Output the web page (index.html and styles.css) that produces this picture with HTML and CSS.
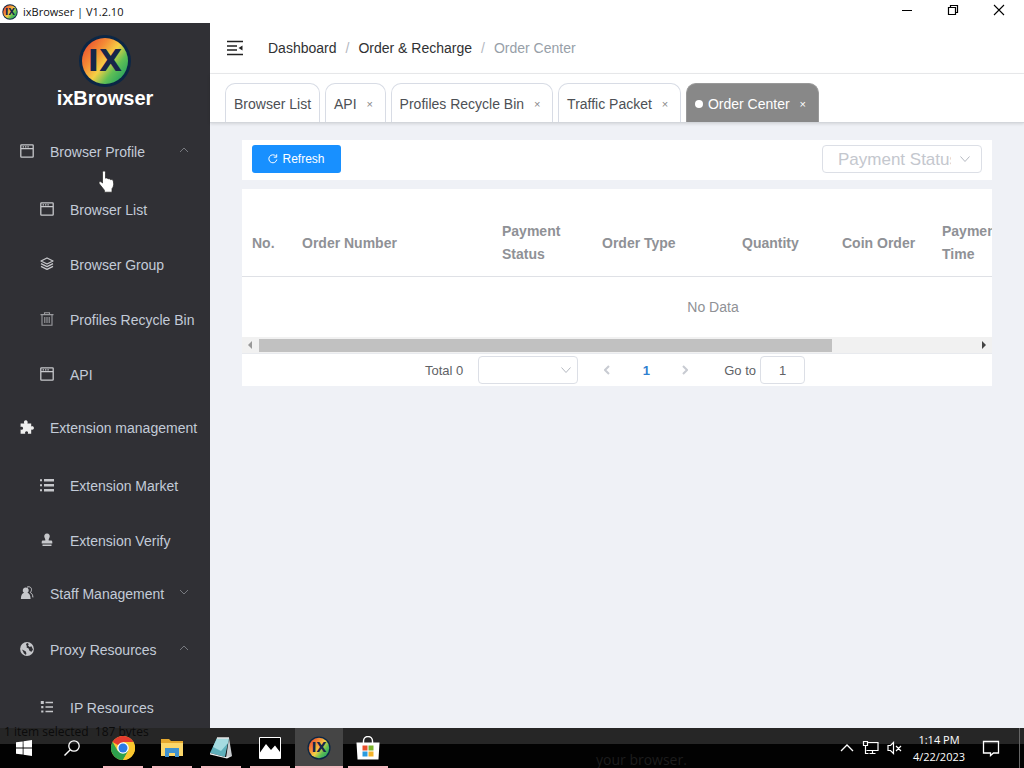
FILE: index.html
```html
<!DOCTYPE html>
<html lang="en">
<head>
<meta charset="utf-8">
<title>ixBrowser | V1.2.10</title>
<link rel="stylesheet" href="styles.css">
</head>
<body>
<svg class="defs" aria-hidden="true">
  <defs>
    <linearGradient id="rainbow" x1="0" y1="0.1" x2="1" y2="0.9">
      <stop offset="0" stop-color="#e8452f"/><stop offset="0.3" stop-color="#f58a35"/><stop offset="0.52" stop-color="#f4cf45"/><stop offset="0.72" stop-color="#5fbf55"/><stop offset="1" stop-color="#169a62"/>
    </linearGradient>
    <symbol id="logo" viewBox="0 0 54 54">
      <circle cx="27" cy="27" r="26" fill="#0b2645"/>
      <circle cx="27" cy="27" r="23" fill="url(#rainbow)"/>
      <text x="27" y="37" text-anchor="middle" class="logo-text">IX</text>
    </symbol>
    <symbol id="window" viewBox="0 0 14 14"><path d="M1.5.8h11q.7 0 .7.7v11q0 .7-.7.7h-11q-.7 0-.7-.7v-11q0-.7.7-.7zM1 4.7h12M2.6 2.8h1.4M5 2.8h1.4M7.4 2.8h1.4" fill="none" stroke="currentColor" stroke-width="1.3"/></symbol>
    <symbol id="list" viewBox="0 0 14 14"><path d="M4 1h10v2.4H4zM4 6h10v2.4H4zM4 11h10v2.4H4zM0 1.2h2v2H0zM0 6.2h2v2H0zM0 11.2h2v2H0z" fill="currentColor"/></symbol>
  </defs>
</svg>

<header class="titlebar">
  <svg class="title-logo"><use href="#logo"/></svg>
  <span class="title-text">ixBrowser | V1.2.10</span>
  <div class="window-buttons">
    <button aria-label="Minimize"><svg width="12" height="12"><path d="M1 6.5h10" stroke="#000" fill="none"/></svg></button>
    <button aria-label="Restore"><svg width="12" height="12"><path d="M1.500 3.500h7v7h-7zM3.500 3.500v-2h7v7h-2" stroke="#000" stroke-width="1.2" fill="none"/></svg></button>
    <button aria-label="Close"><svg width="12" height="12"><path d="M1 1l10 10M11 1L1 11" stroke="#000" stroke-width="1.1" fill="none"/></svg></button>
  </div>
</header>

<div class="app">
  <nav class="sidebar">
    <div class="brand"><svg class="brand-logo"><use href="#logo"/></svg><span>ixBrowser</span></div>
    <ul class="menu">
      <li><a class="item" href="#"><svg class="icon"><use href="#window"/></svg>Browser Profile<svg class="arrow" viewBox="0 0 10 6"><path d="M1 5l4-4 4 4"/></svg></a>
        <ul>
          <li><a class="item sub" href="#"><svg class="icon"><use href="#window"/></svg>Browser List</a></li>
          <li><a class="item sub" href="#"><svg class="icon" viewBox="0 0 14 14"><path d="M7 1l6 3-6 3-6-3zM1 6.600l6 3 6-3M1 9.400l6 3 6-3" fill="none" stroke="currentColor" stroke-width="1.3" stroke-linejoin="round"/></svg>Browser Group</a></li>
          <li><a class="item sub dim" href="#"><svg class="icon" viewBox="0 0 14 14"><path d="M.5 2.600h13M4.500 2.500V.7h5v1.800M2 3v10.200h10V3M4.800 5v6M7 5v6M9.200 5v6" fill="none" stroke="currentColor" stroke-width="1.1"/></svg><span>Profiles Recycle Bin</span></a></li>
          <li><a class="item sub" href="#"><svg class="icon"><use href="#window"/></svg>API</a></li>
        </ul>
      </li>
      <li><a class="item" href="#"><svg class="icon bright" viewBox="0 0 14 14"><path d="M.6 3.400h3.700C3.400 1.700 4.300.2 5.800.2s2.400 1.500 1.600 3.200h3.800v3.200c1.500-.7 2.700.1 2.700 1.400s-1.200 2.100-2.700 1.400v4.300H7.800c.7-1.500 0-2.500-1.200-2.500s-2 .9-1.300 2.500H.6V9.500c1.500.6 2.500-.1 2.500-1.300S2 6.300.6 6.900z" fill="currentColor"/></svg>Extension management</a>
        <ul>
          <li><a class="item sub" href="#"><svg class="icon"><use href="#list"/></svg>Extension Market</a></li>
          <li><a class="item sub" href="#"><svg class="icon" viewBox="0 0 14 14"><path d="M7 .6a2.700 2.700 0 0 1 2.500 3.900C8.700 5.800 8.600 6.600 8.700 7.600h2.400q1.200 0 1.200 1.300v1.600H1.700V8.900q0-1.300 1.200-1.300h2.400c.1-1 0-1.800-.8-3.100A2.700 2.700 0 0 1 7 .6zM2.500 11.400h9v1.600h-9z" fill="currentColor"/></svg>Extension Verify</a></li>
        </ul>
      </li>
      <li><a class="item" href="#"><svg class="icon" viewBox="0 0 14 14"><path d="M5.800 1.500a2.900 2.900 0 0 1 1.700 5.300c2 .7 3 2.600 3.100 6.200H.9c.1-3.600 1-5.500 3.100-6.200a2.900 2.900 0 0 1 1.800-5.300z" fill="currentColor"/><path d="M7 1.200c2.700-1.300 5 .6 4.400 3.200-.2 1-.6 1.600-1.200 2.100 1.800.8 2.600 2.500 2.700 4.900" fill="none" stroke="currentColor"/></svg>Staff Management<svg class="arrow" viewBox="0 0 10 6"><path d="M1 1l4 4 4-4"/></svg></a></li>
      <li><a class="item" href="#"><svg class="icon" viewBox="0 0 14 14"><circle cx="7" cy="7" r="6.900" fill="currentColor"/><path d="M7 .8L8.800 2 8 3.400l1.600 1.500 1.800-.6L13 7.400l-1.400 2.300L9.600 9 8.600 6.600 6.600 5.500 6.800 4 6 2.400zM2 7.500l3.600 1.700.8 2L6 13 4 11.500z" fill="#303035"/></svg>Proxy Resources<svg class="arrow" viewBox="0 0 10 6"><path d="M1 5l4-4 4 4"/></svg></a>
        <ul>
          <li><a class="item sub" href="#"><svg class="icon" viewBox="0 0 14 14"><path d="M5.500 2.500H13M5.500 7H13M5.500 11.500H13" stroke="currentColor" stroke-width="1.4"/><path d="M.8 1h3v3h-3zM1.200 6h2.200v2.200H1.200zM1.200 10.400h2.200v2.200H1.200z" fill="currentColor"/></svg>IP Resources</a></li>
        </ul>
      </li>
    </ul>
    <svg class="cursor" viewBox="0 0 18 23"><path d="M7 .8q1.500 0 1.500 1.700v5.700c.9-.5 2.200-.2 2.500.7 1-.5 2.200-.1 2.500.8 1-.4 2.500 0 2.800 1.200l.3 2.300c.2 2-.3 4-1.600 5.500v3.500H7.400v-2L2.300 13.800C1.300 12.300 2.700 10.800 4.300 12L5.500 13V2.500Q5.500.8 7 .8z" fill="#fff" stroke="#222" stroke-width=".7"/></svg>
  </nav>

  <div class="main">
    <div class="topbar">
      <button class="fold" aria-label="Collapse menu"><svg width="18" height="16" viewBox="0 0 18 16"><path d="M1 1.500h16M1 6h10M1 10h10M1 14.500h16" stroke="#222" stroke-width="1.600"/><path d="M12.500 8L16.500 5.500v5z" fill="#222"/></svg></button>
      <nav class="crumbs" aria-label="Breadcrumb"><a href="#">Dashboard</a><i>/</i><a href="#">Order &amp; Recharge</a><i>/</i><span>Order Center</span></nav>
    </div>
    <div class="tabs">
      <a class="tab" href="#">Browser List</a>
      <div class="tab"><a href="#">API</a><button aria-label="Close API">×</button></div>
      <div class="tab"><a href="#">Profiles Recycle Bin</a><button aria-label="Close Profiles Recycle Bin">×</button></div>
      <div class="tab"><a href="#">Traffic Packet</a><button aria-label="Close Traffic Packet">×</button></div>
      <div class="tab active"><a href="#">Order Center</a><button aria-label="Close Order Center">×</button></div>
    </div>
    <main class="content">
      <section class="toolbar">
        <button class="refresh"><svg width="10" height="10" viewBox="0 0 10 10"><path d="M8.800 5.500A4 4 0 1 1 7.800 2.100M8.700.3v2.900H5.800" fill="none" stroke="#fff"/></svg>Refresh</button>
        <span class="select status"><select aria-label="Payment Status"><option>Payment Status</option></select><svg viewBox="0 0 10 6"><path d="M.5.5L5 5.500 9.500.5"/></svg></span>
      </section>
      <section class="card">
        <div class="table-wrap">
          <table>
            <colgroup><col class="w50"><col class="w200"><col class="w100"><col class="w140"><col class="w100"><col class="w100"><col class="w100"><col></colgroup>
            <thead><tr><th>No.</th><th>Order Number</th><th>Payment Status</th><th>Order Type</th><th>Quantity</th><th>Coin Order</th><th>Payment Time</th><td></td></tr></thead>
            <tbody><tr><td class="empty" colspan="8">No Data</td></tr></tbody>
          </table>
        </div>
        <div class="scrollbar">
          <svg class="step off" viewBox="0 0 4 8"><path d="M4 0v8L0 4z"/></svg>
          <div class="track"><div class="thumb"></div></div>
          <svg class="step" viewBox="0 0 4 8"><path d="M0 0v8l4-4z"/></svg>
        </div>
        <div class="pager">
          <span>Total 0</span>
          <span class="select size"><select aria-label="Page size"><option></option></select><svg viewBox="0 0 10 6"><path d="M.5.5L5 5.500 9.500.5"/></svg></span>
          <div class="pages">
            <button aria-label="Previous page"><svg width="6" height="10"><path d="M5 1L1 5l4 4"/></svg></button>
            <button class="current">1</button>
            <button aria-label="Next page"><svg width="6" height="10"><path d="M1 1l4 4-4 4"/></svg></button>
          </div>
          <label>Go to<input type="text" value="1"></label>
        </div>
      </section>
    </main>
  </div>
</div>

<footer class="taskbar">
  <span class="ghost ghost-left">1 item selected&nbsp; 187 bytes</span>
  <span class="ghost ghost-mid">your browser.</span>
  <button class="task" aria-label="Start"><svg width="16" height="16" viewBox="0 0 16 16"><path d="M0 2.300L6.700 1.400v6.200H0zM7.500 1.300L16 0v7.600H7.500zM0 8.400h6.700v6.200L0 13.700zM7.500 8.400H16V16l-8.500-1.200z" fill="#fff"/></svg></button>
  <button class="task" aria-label="Search"><svg width="16" height="16" viewBox="0 0 16 16"><circle cx="10" cy="6" r="5.200" fill="none" stroke="#fff" stroke-width="1.300"/><path d="M6.300 9.700L.5 15.500" stroke="#fff" stroke-width="1.400"/></svg></button>
  <div class="pinned">
    <button class="task open" aria-label="Chrome"><svg width="24" height="24" viewBox="0 0 24 24"><circle cx="12" cy="12" r="12" fill="#fbc72e"/><path d="M12 12L1.600 6A12 12 0 0 1 22.400 6H12z" fill="#e33b2e"/><path d="M1.600 6A12 12 0 0 0 12 24l5.200-9L12 12 6.800 15z" fill="#2da14c"/><path d="M12 24l5.200-9a6 6 0 0 0 0-6L22.400 6A12 12 0 0 1 12 24z" fill="#fbc72e"/><circle cx="12" cy="12" r="5.800" fill="#fff"/><circle cx="12" cy="12" r="4.500" fill="#2c7be5"/></svg></button>
    <button class="task open" aria-label="File Explorer"><svg width="22" height="20" viewBox="0 0 22 20"><path d="M0 1h8l2 2h12v15H0z" fill="#e5a92f"/><path d="M0 5h22v13H0z" fill="#fbd76a"/><path d="M4 10h14v9h-4v-4H8v4H4z" fill="#3f92cf"/></svg></button>
    <button class="task open" aria-label="Notepad"><svg width="24" height="24" viewBox="0 0 24 24"><path d="M20 2l3 18-6 2z" fill="#c9cdd0"/><path d="M8 2h12l-4 19L1 17z" fill="#5fb0bb"/><path d="M8 2h12l-1 5-7 8-8-4z" fill="#a5dbe0"/><path d="M1 17l15 4 7-1-5 2.500L1 18.500z" fill="#eef1f1"/><path d="M8 2h12" stroke="#e5e5e5" stroke-width="1.500"/></svg></button>
    <button class="task open" aria-label="Photos"><svg width="22" height="22" viewBox="0 0 22 22"><path d="M.5.5h21v21H.5z" fill="#000" stroke="#fff"/><path d="M1 15.500L7 7l5 6 4-4.500 5 6.500V21H1z" fill="#fff"/></svg></button>
    <button class="task open active" aria-label="ixBrowser"><svg width="24" height="24"><use href="#logo"/></svg></button>
    <button class="task open" aria-label="Store"><svg width="24" height="24" viewBox="0 0 24 24"><path d="M7.500 7V5a4.500 4.500 0 0 1 9 0v2" fill="none" stroke="#fff" stroke-width="1.400"/><path d="M.5 6.500h23l-1 17h-21z" fill="#fff"/><path d="M6.500 9.500h5v5h-5z" fill="#e8502c"/><path d="M12.500 9.500h5v5h-5z" fill="#7cb52b"/><path d="M6.500 15.500h5v5h-5z" fill="#2a9bdf"/><path d="M12.500 15.500h5v5h-5z" fill="#f4b32a"/></svg></button>
  </div>
  <div class="tray">
    <button aria-label="Show hidden icons"><svg width="14" height="8"><path d="M1 7l6-6 6 6" fill="none" stroke="#fff" stroke-width="1.300"/></svg></button>
    <button aria-label="Network"><svg width="17" height="16"><path d="M5 2.500h11v8H4.500M1.500 1.500h4v4h-4zM3.500 5.500v8h3M10.500 10.500v3M7.500 13.500h6" fill="none" stroke="#fff" stroke-width="1.200"/></svg></button>
    <button aria-label="Muted"><svg width="15" height="14"><path d="M1 4.500h2.500L6.500 1.500v11L3.500 9.500H1zM9 5l5 5M14 5l-5 5" fill="none" stroke="#fff" stroke-width="1.200"/></svg></button>
    <div class="clock"><span>1:14 PM</span><span>4/22/2023</span></div>
    <button class="notes" aria-label="Notifications"><svg width="18" height="17"><path d="M1.500 1.500h15v11.500h-5L8.500 15.500V13h-7z" fill="none" stroke="#fff" stroke-width="1.300"/></svg></button>
    <div class="peek"></div>
  </div>
</footer>
</body>
</html>
```
FILE: styles.css
```css
* { box-sizing: border-box; }
body {
  margin: 0;
  height: 100vh;
  display: flex;
  flex-direction: column;
  overflow: hidden;
  font-family: "Liberation Sans", Arial, sans-serif;
  font-size: 14px;
  color: #303133;
  background: #fff;
}
button { padding: 0; border: 0; background: none; font: inherit; color: inherit; display: flex; align-items: center; justify-content: center; }
a { color: inherit; text-decoration: none; }
ul { list-style: none; margin: 0; padding: 0; }
.defs { position: absolute; width: 0; height: 0; }
.logo-text { font: bold 30px "DejaVu Sans", sans-serif; fill: #17264a; }

.titlebar { flex: none; height: 23px; display: flex; align-items: center; padding-left: 2px; }
.title-logo { width: 16px; height: 16px; margin-right: 5px; }
.title-text { font: 11px "Open Sans", "Noto Sans", sans-serif; color: #111; }
.window-buttons { display: flex; margin-left: auto; height: 20px; padding-right: 2px; align-self: flex-start; }
.window-buttons button { width: 46px; }

.app { flex: 1; min-height: 0; display: flex; }
.sidebar { position: relative; flex: none; width: 210px; overflow: hidden; background: #303035; color: #c3cbd8; }
.brand { height: 101px; padding-top: 11px; display: flex; flex-direction: column; align-items: center; font-size: 20px; line-height: 20px; font-weight: bold; color: #fff; }
.brand-logo { width: 54px; height: 54px; flex: none; }
.item { height: 56px; padding: 0 20px; display: flex; align-items: center; white-space: nowrap; }
.sub { height: 55px; padding: 5px 0 0 40px; }
.icon { width: 14px; height: 14px; flex: none; margin: 0 16px 2px 0; color: #c6c7cb; }
.bright { color: #eee; }
.dim .icon { color: #9a9b9f; }
.arrow { width: 10px; height: 6px; margin: 0 1px 4px auto; fill: none; stroke: #77797f; }
.cursor { position: absolute; left: 97px; top: 147px; width: 18px; height: 23px; }

.main { flex: 1; min-width: 0; display: flex; flex-direction: column; background: #eff1f6; }
.topbar { flex: none; height: 51px; display: flex; align-items: center; padding-left: 16px; background: #fff; border-bottom: 1px solid #ebecee; }
.fold { margin-right: 24px; }
.crumbs { display: flex; }
.crumbs i { margin: 0 9px; color: #b4b8bf; font-style: normal; }
.crumbs span { color: #97a0a8; }
.tabs { flex: none; height: 49px; padding: 9px 15px 0; display: flex; gap: 5px; background: #fff; border-bottom: 1px solid #d3d6db; box-shadow: 0 1px 3px #0000001f; z-index: 1; }
.tab { height: 39px; padding: 2px 8px 0; display: flex; align-items: center; border: 1px solid #d8dce5; border-bottom: 0; border-radius: 10px 10px 0 0; color: #4d5055; background: #fff; white-space: nowrap; }
.tab button { width: 14px; margin-left: 6px; font-size: 11px; color: #888; }
.tab.active { background: #888; border-color: #999; color: #fff; }
.tab.active::before { content: ""; width: 8px; height: 8px; margin-right: 5px; border-radius: 50%; background: #fff; }
.tab.active button { color: #fff; }

.content { padding: 17px 32px; display: flex; flex-direction: column; gap: 9px; }
.toolbar { height: 40px; padding: 0 10px 2px; display: flex; align-items: center; justify-content: space-between; background: #fff; }
.refresh { height: 28px; width: 89px; gap: 4px; border-radius: 3px; background: #1890ff; color: #fff; font-size: 12px; }
.select { position: relative; display: flex; }
.select select { appearance: none; width: 100%; height: 28px; padding: 0 30px 0 15px; border: 1px solid #dcdfe6; border-radius: 4px; background: #fff; color: #c4c7ce; font: 17px "Liberation Sans", Arial, sans-serif; }
.select svg { position: absolute; right: 12px; top: 11px; width: 10px; height: 6px; fill: none; stroke: #b4b8c0; }
.status { width: 160px; }
.size { width: 100px; margin: 0 22px 0 15px; }
.size svg { right: 7px; }

.card { background: #fff; }
.table-wrap { overflow: hidden; padding-top: 21px; }
table { width: 942px; table-layout: fixed; border-collapse: separate; border-spacing: 0; color: #8f9196; line-height: 23px; }
.w50 { width: 50px; }
.w100 { width: 100px; }
.w140 { width: 140px; }
.w200 { width: 200px; }
thead th, thead td { height: 67px; padding: 0 10px; text-align: left; border-bottom: 1px solid #dfe1e6; }
.empty { height: 60px; padding: 0; text-align: center; }
.scrollbar { height: 17px; display: flex; align-items: center; justify-content: space-between; padding: 0 6px; background: #f1f1f1; border-bottom: 1px solid #e8eaee; }
.step { width: 4px; height: 8px; fill: #444; }
.off { fill: #999; }
.track { flex: 1; margin: 0 7px; }
.thumb { width: 80%; height: 13px; background: #c1c1c1; }
.pager { height: 32px; display: flex; align-items: center; justify-content: center; padding-right: 4px; font-size: 13px; color: #606266; }
.pages { display: flex; gap: 25px; margin-right: 32px; }
.pages button { width: 14px; height: 28px; }
.pages svg { fill: none; stroke: #c8cbd2; stroke-width: 2; }
.pages .current { font-weight: bold; color: #2f80d0; }
.pager label { display: flex; align-items: center; gap: 4px; }
.pager input { width: 45px; height: 28px; border: 1px solid #dcdfe6; border-radius: 4px; text-align: center; font: 13px "Liberation Sans", Arial, sans-serif; color: #606266; }

.taskbar { position: relative; flex: none; height: 40px; display: flex; color: #fff; background: linear-gradient(#262626 16px, #020202 16px); }
.ghost { position: absolute; font: 12px/16px "Open Sans", "Noto Sans", sans-serif; color: #0b0b0b; white-space: nowrap; }
.ghost-left { left: 4px; top: -4px; }
.ghost-mid { left: 596px; top: 24px; font-size: 14px; color: #1d1d1d; }
.task { position: relative; width: 48px; height: 40px; }
.pinned { display: flex; gap: 1px; margin-left: 3px; }
.open::after { content: ""; position: absolute; left: 4px; right: 4px; bottom: 0; height: 2px; background: #f3b8bf; }
.task.active { background: #454545; }
.task.active::after { left: 0; right: 0; }
.tray { margin-left: auto; display: flex; align-items: center; gap: 8px; }
.clock { width: 58px; display: flex; flex-direction: column; align-items: center; font: 11px/17px "Open Sans", "Noto Sans", sans-serif; }
.notes { margin-left: 6px; }
.peek { width: 5px; height: 40px; margin-left: 11px; border-left: 1px solid #666; }
```
